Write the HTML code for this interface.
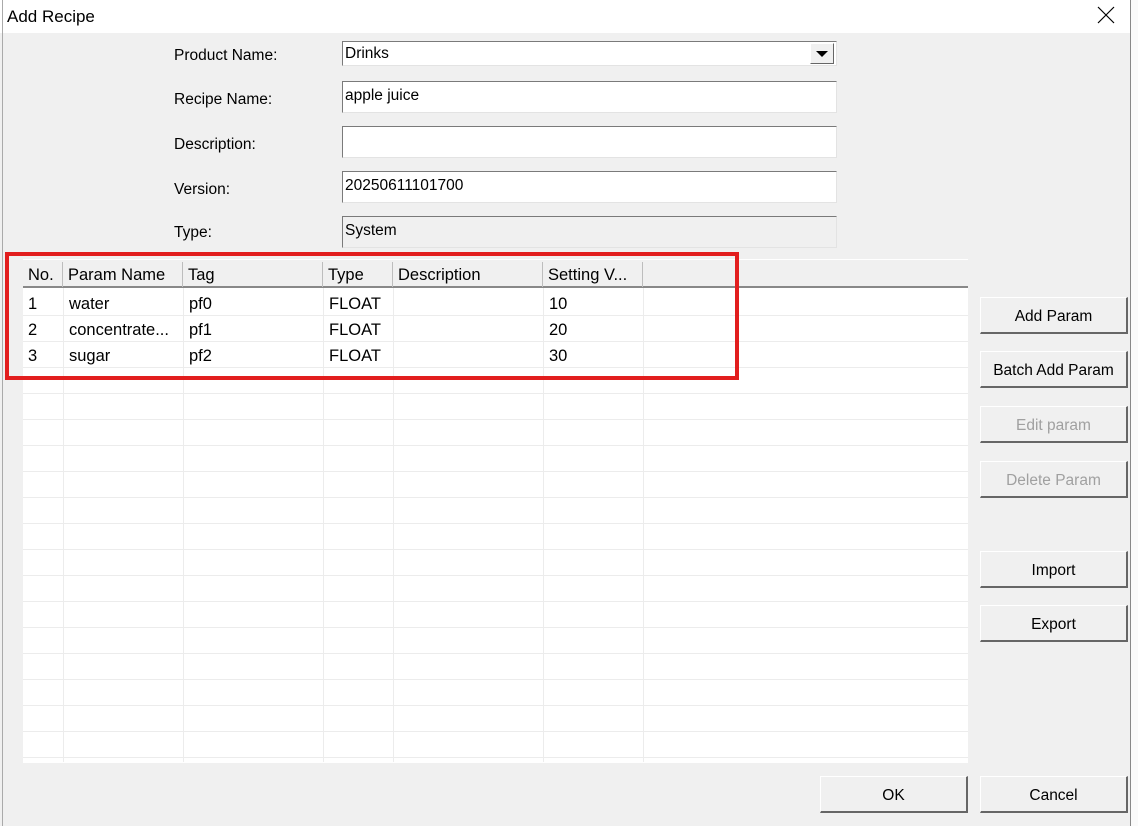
<!DOCTYPE html><html><head><style>
*{box-sizing:border-box;margin:0;padding:0}
body{width:1138px;height:826px;position:relative;overflow:hidden;background:#f0f0f0;font-family:"Liberation Sans",sans-serif;font-size:15px;color:#000}
.a{position:absolute}
.lbl{position:absolute;left:174px;font-size:15.5px}
.inp{position:absolute;left:342px;width:495px;background:#fff;border:1px solid #7a7a7a;border-right-color:#e3e3e3;border-bottom-color:#e3e3e3;padding:5px 2px 0;font-size:15.5px;white-space:nowrap}
.btn{position:absolute;width:148px;height:37px;background:#f0f0f0;border:1px solid #fff;border-right:2px solid #666;border-bottom:2px solid #666;text-align:center;line-height:37px;font-size:15.5px}
.dis{color:#a0a0a0}
.hl{position:absolute;left:23px;width:945px;height:1px;background:#ececec}
.vl{position:absolute;top:262px;width:1px;height:500px;background:#ececec}
.hc{position:absolute;top:262px;height:25px;line-height:27px;padding-left:5px;font-size:16.5px;border-right:1px solid #bdbdbd}
.c{position:absolute;font-size:16.5px;line-height:28px}
</style></head><body>
<div class="a" style="left:0;top:0;width:1130px;height:33px;background:#fff"></div>
<div class="a" style="left:7px;top:7px;font-size:17px">Add Recipe</div>
<svg class="a" style="left:1097px;top:6px" width="18" height="18" viewBox="0 0 18 18"><path d="M1 1L17 17M17 1L1 17" stroke="#000" stroke-width="1.2" fill="none"/></svg>
<div class="a" style="left:1130px;top:0;width:1px;height:826px;background:#888"></div>
<div class="a" style="left:1131px;top:0;width:7px;height:826px;background:#fafafa"></div>
<div class="a" style="left:2px;top:0;width:1px;height:826px;background:#aaa"></div>

<div class="lbl" style="top:47px">Product Name:</div>
<div class="lbl" style="top:91px">Recipe Name:</div>
<div class="lbl" style="top:136px">Description:</div>
<div class="lbl" style="top:181px">Version:</div>
<div class="lbl" style="top:224px">Type:</div>
<div class="inp" style="top:41px;height:25px;padding-top:3px">Drinks</div>
<div class="a" style="left:810px;top:43px;width:24px;height:21px;background:#f0f0f0;border:1px solid #fff;border-right-color:#666;border-bottom-color:#666"></div>
<div class="a" style="left:816px;top:51px;width:0;height:0;border-left:6px solid transparent;border-right:6px solid transparent;border-top:6px solid #000"></div>
<div class="inp" style="top:81px;height:32px">apple juice</div>
<div class="inp" style="top:126px;height:32px"></div>
<div class="inp" style="top:171px;height:32px">20250611101700</div>
<div class="inp" style="top:216px;height:32px;background:#f0f0f0">System</div>

<div class="a" style="left:23px;top:259px;width:945px;height:1px;background:#fff"></div>
<div class="a" style="left:23px;top:287px;width:945px;height:476px;background:#fff"></div>
<div class="a" style="left:23px;top:286px;width:945px;height:2px;background:#888"></div>
<div class="hc" style="left:23px;width:40px">No.</div>
<div class="hc" style="left:63px;width:120px">Param Name</div>
<div class="hc" style="left:183px;width:140px">Tag</div>
<div class="hc" style="left:323px;width:70px">Type</div>
<div class="hc" style="left:393px;width:150px">Description</div>
<div class="hc" style="left:543px;width:100px">Setting V...</div>
<div class="vl" style="left:63px;top:288px;height:474px"></div>
<div class="vl" style="left:183px;top:288px;height:474px"></div>
<div class="vl" style="left:323px;top:288px;height:474px"></div>
<div class="vl" style="left:393px;top:288px;height:474px"></div>
<div class="vl" style="left:543px;top:288px;height:474px"></div>
<div class="vl" style="left:643px;top:288px;height:474px"></div>
<div class="hl" style="top:315px"></div><div class="hl" style="top:341px"></div><div class="hl" style="top:367px"></div><div class="hl" style="top:393px"></div><div class="hl" style="top:419px"></div><div class="hl" style="top:445px"></div><div class="hl" style="top:471px"></div><div class="hl" style="top:497px"></div><div class="hl" style="top:523px"></div><div class="hl" style="top:549px"></div><div class="hl" style="top:575px"></div><div class="hl" style="top:601px"></div><div class="hl" style="top:627px"></div><div class="hl" style="top:653px"></div><div class="hl" style="top:679px"></div><div class="hl" style="top:705px"></div><div class="hl" style="top:731px"></div><div class="hl" style="top:757px"></div>

<div class="c" style="left:28px;top:290px">1</div><div class="c" style="left:69px;top:290px">water</div><div class="c" style="left:189px;top:290px">pf0</div><div class="c" style="left:329px;top:290px">FLOAT</div><div class="c" style="left:549px;top:290px">10</div>
<div class="c" style="left:28px;top:316px">2</div><div class="c" style="left:69px;top:316px">concentrate...</div><div class="c" style="left:189px;top:316px">pf1</div><div class="c" style="left:329px;top:316px">FLOAT</div><div class="c" style="left:549px;top:316px">20</div>
<div class="c" style="left:28px;top:342px">3</div><div class="c" style="left:69px;top:342px">sugar</div><div class="c" style="left:189px;top:342px">pf2</div><div class="c" style="left:329px;top:342px">FLOAT</div><div class="c" style="left:549px;top:342px">30</div>

<div class="a" style="left:5px;top:252px;width:734px;height:128px;border:4px solid #e21e1e"></div>

<div class="btn" style="left:980px;top:297px">Add Param</div>
<div class="btn" style="left:980px;top:351px">Batch Add Param</div>
<div class="btn dis" style="left:980px;top:406px">Edit param</div>
<div class="btn dis" style="left:980px;top:461px">Delete Param</div>
<div class="btn" style="left:980px;top:551px">Import</div>
<div class="btn" style="left:980px;top:605px">Export</div>
<div class="btn" style="left:820px;top:776px">OK</div>
<div class="btn" style="left:980px;top:776px">Cancel</div>
</body></html>
